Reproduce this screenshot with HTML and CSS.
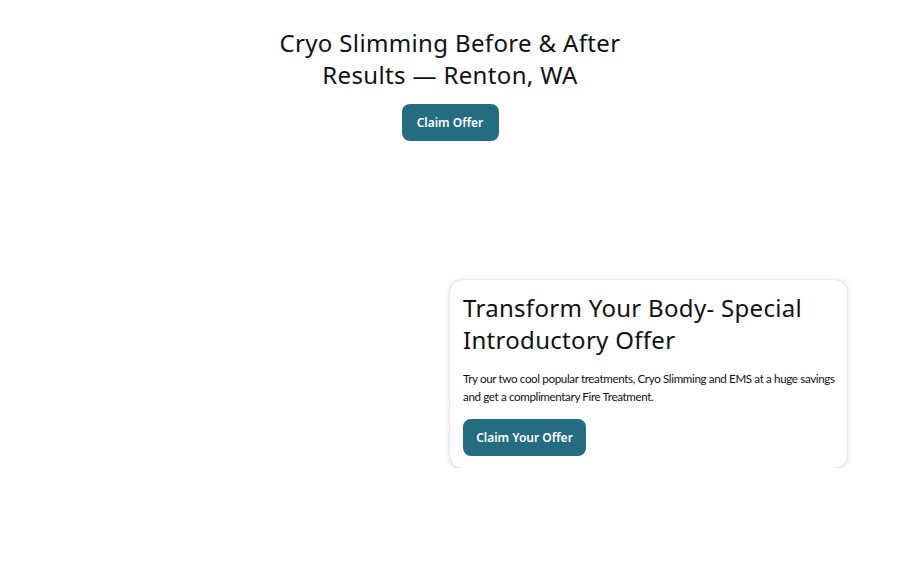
FILE: index.html
```html
<!DOCTYPE html>
<html>
<head>
<meta charset="utf-8">
<link rel="stylesheet" href="styles.css">
</head>
<body>
<header class="hero">
  <h1 class="hero-title">Cryo Slimming Before &amp; After<br>Results — Renton, WA</h1>
  <a class="btn btn-small" href="#">Claim Offer</a>
</header>
<section class="offer-row">
  <div class="card">
    <h2 class="card-title">Transform Your Body- Special Introductory Offer</h2>
    <p class="card-text">Try our two cool popular treatments, Cryo Slimming and EMS at a huge savings and get a complimentary Fire Treatment.</p>
    <a class="btn btn-large" href="#">Claim Your Offer</a>
  </div>
</section>
</body>
</html>
```
FILE: styles.css
```css
* { box-sizing: border-box; }
body {
  margin: 0;
  background: #fff;
  color: #111;
  font-family: "Lato", sans-serif;
}
.hero {
  display: flex;
  flex-direction: column;
  align-items: center;
  padding-top: 27px;
}
.hero-title {
  margin: 0;
  font-family: "Noto Sans", sans-serif;
  font-weight: 400;
  font-size: 24px;
  line-height: 32px;
  letter-spacing: 0.35px;
  text-align: center;
  color: #111;
}
.btn {
  display: inline-flex;
  align-items: center;
  justify-content: center;
  background: #256c80;
  color: #fff;
  text-decoration: none;
  font-family: "Noto Sans", sans-serif;
  font-weight: 600;
  border-radius: 8px;
}
.btn-small {
  margin-top: 13px;
  width: 97px;
  height: 37px;
  font-size: 12px;
}
.btn-large {
  width: 123px;
  height: 37px;
  font-size: 12px;
}
.offer-row {
  display: flex;
  margin-top: 139px;
  padding: 0 53px 0 450px;
}
.card {
  flex: 1;
  background: #fff;
  border-radius: 12px;
  box-shadow: 0 0 1px rgba(0,0,0,0.25), 0 1px 6px rgba(0,0,0,0.16);
  padding: 12px 13px 12px 13px;
}
.card-title {
  margin: 0;
  font-family: "Noto Sans", sans-serif;
  font-weight: 400;
  font-size: 24px;
  line-height: 32px;
  letter-spacing: 0.3px;
  color: #111;
}
.card-text {
  margin: 14px -6px 13px 0;
  font-family: "Lato", sans-serif;
  font-size: 11.6px;
  letter-spacing: -0.36px;
  line-height: 18px;
  color: #111;
}
```
